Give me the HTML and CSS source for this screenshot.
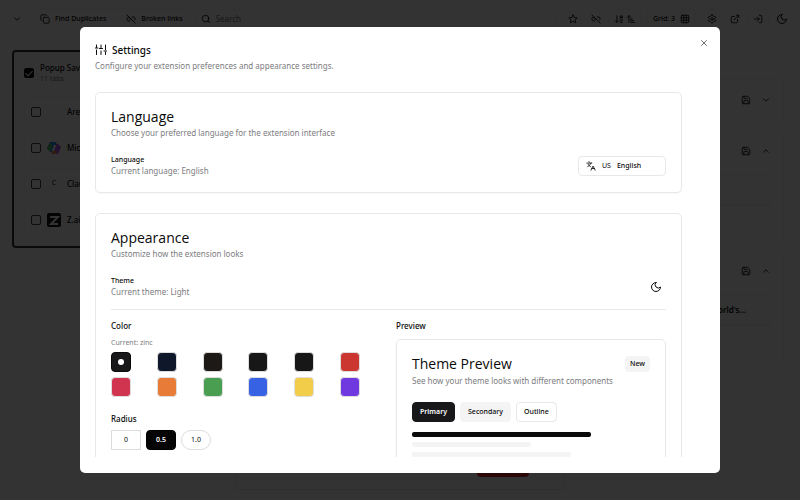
FILE: index.html
```html
<!DOCTYPE html>
<html lang="en">
<head>
  <meta charset="UTF-8">
  <meta name="viewport" content="width=device-width, initial-scale=1.0">
  <title>Settings</title>
  <link rel="stylesheet" href="styles.css">
</head>
<body>
<svg class="sprite" aria-hidden="true">
  <symbol id="chevron-down" viewBox="0 0 24 24"><path d="m6 9 6 6 6-6"/></symbol>
  <symbol id="chevron-up" viewBox="0 0 24 24"><path d="m18 15-6-6-6 6"/></symbol>
  <symbol id="copy" viewBox="0 0 24 24"><rect width="14" height="14" x="8" y="8" rx="2"/><path d="M4 16c-1.1 0-2-.9-2-2V4c0-1.1.9-2 2-2h10c1.1 0 2 .9 2 2"/></symbol>
  <symbol id="unlink" viewBox="0 0 24 24"><path d="M9 17H7A5 5 0 0 1 7 7"/><path d="M15 7h2a5 5 0 0 1 4 8"/><path d="M8 12h4"/><path d="m2 2 20 20"/></symbol>
  <symbol id="search" viewBox="0 0 24 24"><circle cx="11" cy="11" r="8"/><path d="m21 21-4.3-4.3"/></symbol>
  <symbol id="star" viewBox="0 0 24 24"><path d="m12 2 3.1 6.3 6.9 1-5 4.9 1.2 6.8-6.2-3.2L5.800 21 7 14.200 2 9.300l6.900-1z"/></symbol>
  <symbol id="sort-az" viewBox="0 0 24 24"><path d="m3 16 4 4 4-4"/><path d="M7 20V4"/><path d="M20 8h-5"/><path d="M15 10V6.500a2.500 2.500 0 0 1 5 0V10"/><path d="M15 14h5l-5 6h5"/></symbol>
  <symbol id="sort-up" viewBox="0 0 24 24"><path d="m3 8 4-4 4 4"/><path d="M7 4v16"/><path d="M11 12h4"/><path d="M11 16h7"/><path d="M11 20h10"/></symbol>
  <symbol id="grid" viewBox="0 0 24 24"><rect width="18" height="18" x="3" y="3" rx="2"/><path d="M3 9h18M3 15h18M9 3v18M15 3v18"/></symbol>
  <symbol id="gear" viewBox="0 0 24 24"><path d="M12.220 2h-.44a2 2 0 0 0-2 2v.18a2 2 0 0 1-1 1.730l-.43.25a2 2 0 0 1-2 0l-.15-.08a2 2 0 0 0-2.730.73l-.22.38a2 2 0 0 0 .73 2.730l.15.1a2 2 0 0 1 1 1.720v.51a2 2 0 0 1-1 1.740l-.15.09a2 2 0 0 0-.73 2.730l.22.38a2 2 0 0 0 2.730.73l.15-.08a2 2 0 0 1 2 0l.43.25a2 2 0 0 1 1 1.730V20a2 2 0 0 0 2 2h.44a2 2 0 0 0 2-2v-.18a2 2 0 0 1 1-1.730l.43-.25a2 2 0 0 1 2 0l.15.08a2 2 0 0 0 2.730-.73l.22-.39a2 2 0 0 0-.73-2.730l-.15-.08a2 2 0 0 1-1-1.740v-.5a2 2 0 0 1 1-1.740l.15-.09a2 2 0 0 0 .73-2.730l-.22-.38a2 2 0 0 0-2.730-.73l-.15.08a2 2 0 0 1-2 0l-.43-.25a2 2 0 0 1-1-1.730V4a2 2 0 0 0-2-2z"/><circle cx="12" cy="12" r="3"/></symbol>
  <symbol id="external" viewBox="0 0 24 24"><path d="M15 3h6v6"/><path d="M10 14 21 3"/><path d="M18 13v6a2 2 0 0 1-2 2H5a2 2 0 0 1-2-2V8a2 2 0 0 1 2-2h6"/></symbol>
  <symbol id="login" viewBox="0 0 24 24"><path d="M15 3h4a2 2 0 0 1 2 2v14a2 2 0 0 1-2 2h-4"/><path d="m10 17 5-5-5-5"/><path d="M15 12H3"/></symbol>
  <symbol id="moon" viewBox="0 0 24 24"><path d="M12 3a6 6 0 0 0 9 9 9 9 0 1 1-9-9Z"/></symbol>
  <symbol id="save" viewBox="0 0 24 24"><path d="M15.200 3a2 2 0 0 1 1.400.6l3.800 3.800a2 2 0 0 1 .6 1.400V19a2 2 0 0 1-2 2H5a2 2 0 0 1-2-2V5a2 2 0 0 1 2-2z"/><path d="M17 21v-7a1 1 0 0 0-1-1H8a1 1 0 0 0-1 1v7"/><path d="M7 3v4a1 1 0 0 0 1 1h7"/></symbol>
  <symbol id="sliders" viewBox="0 0 24 24"><path d="M3 21v-9M3 7V2M12 21v-7M12 9V2M21 21v-5M21 11V2M0 8h6M9 9h6M18 14h6"/></symbol>
  <symbol id="languages" viewBox="0 0 24 24"><path d="m5 8 6 6"/><path d="m4 14 6-6 2-3"/><path d="M2 5h12"/><path d="M7 2h1"/><path d="m22 22-5-10-5 10"/><path d="M14 18h6"/></symbol>
  <symbol id="close" viewBox="0 0 24 24"><path d="M18 6 6 18M6 6l12 12"/></symbol>
</svg>

<header class="toolbar">
  <button class="tool-button" aria-label="Collapse"><svg class="icon"><use href="#chevron-down"/></svg></button>
  <div class="tool-group">
    <button class="tool-button"><svg class="icon"><use href="#copy"/></svg>Find Duplicates</button>
    <button class="tool-button"><svg class="icon"><use href="#unlink"/></svg>Broken links</button>
  </div>
  <div class="search">
    <svg class="icon"><use href="#search"/></svg>
    <input type="text" placeholder="Search" aria-label="Search">
  </div>
  <div class="tool-icons">
    <button class="tool-button" aria-label="Favorites"><svg class="icon"><use href="#star"/></svg></button>
    <button class="tool-button" aria-label="Unlink"><svg class="icon"><use href="#unlink"/></svg></button>
    <button class="tool-button sort-button outlined" aria-label="Sort"><svg class="icon"><use href="#sort-az"/></svg><svg class="icon"><use href="#sort-up"/></svg></button>
    <button class="tool-button outlined grid-button">Grid: 3 <svg class="icon"><use href="#grid"/></svg></button>
    <button class="tool-button outlined" aria-label="Settings"><svg class="icon"><use href="#gear"/></svg></button>
    <button class="tool-button" aria-label="Open"><svg class="icon"><use href="#external"/></svg></button>
    <button class="tool-button outlined" aria-label="Log in"><svg class="icon"><use href="#login"/></svg></button>
    <button class="tool-button" aria-label="Theme"><svg class="icon icon-lg"><use href="#moon"/></svg></button>
  </div>
</header>

<main class="board">
  <section class="group">
    <div class="group-header">
      <input type="checkbox" id="popup" checked>
      <label for="popup">Popup Saved<small>11 tabs</small></label>
    </div>
    <ul class="tabs">
      <li><input type="checkbox" id="tab-1"><span class="favicon"></span><label for="tab-1">Arena</label></li>
      <li><input type="checkbox" id="tab-2">
        <svg class="favicon" viewBox="0 0 14 14">
          <path d="M3 1h6l1 3H7L5 11H3L0 7z" fill="#2496e8"/>
          <path d="M0 6l3-3h2L4 10H2z" fill="#4fc36a"/>
          <path d="M11 3l3 3-3 7H5l-1-3h3l2-7z" fill="#b158e8"/>
          <path d="M5 10h5l-1 3H5z" fill="#f18a4b"/>
          <path d="M7 4h2l-2 6H5z" fill="#fff"/>
        </svg>
        <label for="tab-2">Microsoft</label></li>
      <li><input type="checkbox" id="tab-3"><span class="favicon letter">C</span><label for="tab-3">Claude</label></li>
      <li><input type="checkbox" id="tab-4">
        <svg class="favicon" viewBox="0 0 14 14">
          <rect width="14" height="14" rx="2" fill="#111"/>
          <path d="M3 4h8l-7 7h7" fill="none" stroke="#fff" stroke-width="2"/>
        </svg>
        <label for="tab-4">Z.ai</label></li>
    </ul>
  </section>

  <section class="column">
    <article class="card-row">
      <div class="card-actions"><svg class="icon"><use href="#save"/></svg><svg class="icon"><use href="#chevron-down"/></svg></div>
    </article>
    <article class="card-row">
      <div class="card-actions"><svg class="icon"><use href="#save"/></svg><svg class="icon"><use href="#chevron-up"/></svg></div>
      <div class="entry"></div>
      <div class="entry"></div>
    </article>
    <article class="card-row">
      <div class="card-actions"><svg class="icon"><use href="#save"/></svg><svg class="icon"><use href="#chevron-up"/></svg></div>
      <div class="entry">The World's...</div>
      <div class="entry"></div>
    </article>
  </section>
</main>

<div class="selection-bar">
  <button class="delete-button">Delete</button>
</div>

<div class="overlay">
  <div class="dialog" role="dialog" aria-labelledby="dialog-title">
    <button class="close-button" aria-label="Close"><svg class="icon"><use href="#close"/></svg></button>
    <div class="dialog-header">
      <h1 id="dialog-title"><svg class="icon icon-lg"><use href="#sliders"/></svg>Settings</h1>
      <p class="muted">Configure your extension preferences and appearance settings.</p>
    </div>

    <div class="dialog-body">
      <section class="card">
        <h2>Language</h2>
        <p class="muted">Choose your preferred language for the extension interface</p>
        <div class="setting">
          <div>
            <h3>Language</h3>
            <p class="muted">Current language: English</p>
          </div>
          <button class="language-button"><svg class="icon"><use href="#languages"/></svg><span class="flag">US</span><span>English</span></button>
        </div>
      </section>

      <section class="card">
        <h2>Appearance</h2>
        <p class="muted">Customize how the extension looks</p>
        <div class="setting">
          <div>
            <h3>Theme</h3>
            <p class="muted">Current theme: Light</p>
          </div>
          <button class="theme-button" aria-label="Toggle theme"><svg class="icon icon-lg"><use href="#moon"/></svg></button>
        </div>

        <div class="appearance">
          <div>
            <h4>Color</h4>
            <p class="current">Current: zinc</p>
            <div class="swatches">
              <button class="swatch zinc active" aria-label="Zinc"></button>
              <button class="swatch slate" aria-label="Slate"></button>
              <button class="swatch stone" aria-label="Stone"></button>
              <button class="swatch gray" aria-label="Gray"></button>
              <button class="swatch neutral" aria-label="Neutral"></button>
              <button class="swatch red" aria-label="Red"></button>
              <button class="swatch rose" aria-label="Rose"></button>
              <button class="swatch orange" aria-label="Orange"></button>
              <button class="swatch green" aria-label="Green"></button>
              <button class="swatch blue" aria-label="Blue"></button>
              <button class="swatch yellow" aria-label="Yellow"></button>
              <button class="swatch violet" aria-label="Violet"></button>
            </div>
            <h4>Radius</h4>
            <div class="radius-options">
              <button class="radius square">0</button>
              <button class="radius active">0.5</button>
              <button class="radius round">1.0</button>
            </div>
          </div>
          <div>
            <h4>Preview</h4>
            <div class="card preview">
              <div class="preview-header">
                <h2>Theme Preview</h2>
                <span class="badge">New</span>
              </div>
              <p class="muted">See how your theme looks with different components</p>
              <div class="preview-buttons">
                <button class="button primary">Primary</button>
                <button class="button secondary">Secondary</button>
                <button class="button">Outline</button>
              </div>
              <div class="bar bar-primary"></div>
              <div class="bar bar-half"></div>
              <div class="bar bar-two-thirds"></div>
            </div>
          </div>
        </div>
      </section>
    </div>
  </div>
</div>
</body>
</html>
```
FILE: styles.css
```css
:root {
  --foreground: #0a0a0a;
  --primary: #18181b;
  --muted: #7c7c80;
  --border: #e8e8ea;
  --border-light: #f2f2f3;
  --secondary: #f4f4f5;
}

* {
  box-sizing: border-box;
}

body {
  margin: 0;
  height: 100vh;
  overflow: hidden;
  font-family: "Noto Sans", sans-serif;
  font-size: 8px;
  line-height: 12px;
  color: var(--foreground);
  background: #fff;
}

h1, h2, h3, h4, p, ul {
  margin: 0;
  padding: 0;
}

button, input {
  font: inherit;
  color: inherit;
}

button {
  display: flex;
  align-items: center;
  justify-content: center;
  padding: 0;
  border: 1px solid transparent;
  border-radius: 4px;
  background: none;
  cursor: pointer;
}

.sprite {
  display: none;
}

.icon {
  width: 10px;
  height: 10px;
  flex: none;
  fill: none;
  stroke: currentColor;
  stroke-width: 2;
  stroke-linecap: round;
  stroke-linejoin: round;
}

.icon-lg {
  width: 12px;
  height: 12px;
}

/* page behind the dialog */
.toolbar {
  display: flex;
  align-items: center;
  height: 38px;
  padding: 0 6px;
  gap: 5px;
  border-bottom: 1px solid var(--border-light);
  font-size: 7px;
  font-weight: 500;
}

.tool-button {
  height: 20px;
  min-width: 22px;
  gap: 5px;
  padding: 0 5px;
}

.tool-group {
  display: flex;
  gap: 8px;
  border: 1px solid var(--border-light);
  border-radius: 4px;
}

.search {
  display: flex;
  flex: 1;
  align-items: center;
  gap: 5px;
  height: 20px;
  padding: 0 5px;
  border: 1px solid var(--border-light);
  border-radius: 4px;
}

.search input {
  width: 100%;
  padding: 0;
  border: 0;
  outline: none;
  background: none;
  font-size: 8px;
  font-weight: 400;
}

.tool-icons {
  display: flex;
  align-items: center;
  gap: 1px;
}

.outlined {
  border-color: var(--border-light);
}

.sort-button {
  gap: 2px;
}

.grid-button {
  margin: 0 4px;
}

.board {
  display: flex;
  justify-content: space-between;
  padding: 12px 16px 0 12px;
}

.group {
  width: 200px;
  height: 198px;
  padding: 10px 8px 0 10px;
  border: 2px solid #333;
  border-radius: 4px;
}

.group-header {
  display: flex;
  align-items: center;
  gap: 6px;
  font-weight: 500;
}

.group-header small {
  display: block;
  font-size: 7px;
  line-height: 10px;
  font-weight: 400;
  color: var(--muted);
}

input[type="checkbox"] {
  appearance: none;
  width: 10px;
  height: 10px;
  margin: 0;
  border: 1px solid #444;
  border-radius: 2px;
}

input[type="checkbox"]:checked {
  border-color: var(--foreground);
  background: var(--foreground);
}

input[type="checkbox"]:checked::after {
  content: "";
  display: block;
  width: 3px;
  height: 6px;
  margin: 0 auto;
  border: solid #fff;
  border-width: 0 1px 1px 0;
  transform: rotate(45deg);
}

.tabs {
  display: grid;
  gap: 5px;
  margin-top: 12px;
  list-style: none;
}

.tabs li {
  display: flex;
  align-items: center;
  gap: 6px;
  height: 31px;
  padding: 0 6px;
  border: 1px solid var(--border-light);
  border-radius: 4px;
  font-weight: 500;
}

.favicon {
  width: 14px;
  height: 14px;
}

.letter {
  font-size: 7px;
  font-weight: 400;
  text-align: center;
}

.column {
  display: grid;
  align-content: start;
  gap: 8px;
  width: 184px;
  padding-top: 29px;
}

.card-row {
  padding: 10px 12px 6px;
  border: 1px solid var(--border-light);
  border-radius: 4px;
}

.card-actions {
  display: flex;
  align-items: center;
  justify-content: flex-end;
  gap: 10px;
  height: 30px;
  margin: -5px 0 0;
}

.entry {
  height: 30px;
  padding: 8px 24px;
  border: 1px solid var(--border-light);
  text-align: right;
  font-weight: 600;
}

.card-actions + .entry {
  margin-top: 9px;
}

.selection-bar {
  position: absolute;
  bottom: 10px;
  left: 50%;
  display: flex;
  justify-content: flex-end;
  width: 330px;
  padding: 12px 35px;
  transform: translateX(-50%);
  border: 1px solid var(--border);
  border-radius: 4px;
  background: #fff;
}

.delete-button {
  width: 52px;
  height: 20px;
  color: #fff;
  background: #dc2626;
}

/* settings dialog */
.overlay {
  position: fixed;
  inset: 0;
  display: flex;
  align-items: center;
  justify-content: center;
  background: rgba(0, 0, 0, 0.8);
}

.dialog {
  position: relative;
  display: flex;
  flex-direction: column;
  gap: 20px;
  width: 80%;
  max-height: calc(100% - 54px);
  padding: 16px 15px;
  border-radius: 5px;
  background: #fff;
}

.close-button {
  position: absolute;
  top: 10px;
  right: 10px;
  color: #555;
}

.dialog-header h1 {
  display: flex;
  align-items: center;
  gap: 5px;
  font-size: 10px;
  line-height: 14px;
  font-weight: 500;
}

.dialog-header .muted {
  margin-top: 3px;
}

.muted {
  color: var(--muted);
}

.dialog-body {
  display: grid;
  gap: 20px;
  padding-right: 23px;
  overflow: hidden;
}

.card {
  padding: 15px;
  border: 1px solid var(--border);
  border-radius: 5px;
  box-shadow: 0 1px 2px rgba(0, 0, 0, 0.04);
}

h2 {
  font-family: "Open Sans", sans-serif;
  font-size: 14px;
  line-height: 17px;
  font-weight: 500;
}

h2 + .muted,
.preview-header + .muted {
  margin-top: 2px;
}

h3 {
  font-size: 7px;
  line-height: 10px;
  font-weight: 500;
}

h4 {
  font-size: 8px;
  line-height: 12px;
  font-weight: 500;
}

.setting {
  display: flex;
  align-items: center;
  justify-content: space-between;
  margin-top: 16px;
}

.language-button {
  justify-content: flex-start;
  width: 88px;
  height: 20px;
  gap: 6px;
  padding: 0 7px;
  border-color: var(--border);
  font-size: 7px;
  font-weight: 500;
}

.flag {
  font-weight: 400;
}

.theme-button {
  width: 20px;
  height: 20px;
}

.appearance {
  display: grid;
  grid-template-columns: 1fr 1fr;
  gap: 15px;
  margin-top: 11px;
  padding-top: 10px;
  border-top: 1px solid var(--border);
}

.current {
  margin-top: 6px;
  font-size: 7px;
  line-height: 10px;
  color: var(--muted);
}

.swatches {
  display: grid;
  grid-template-columns: repeat(6, 1fr);
  gap: 5px;
  margin: 4px 0 16px;
}

.swatch {
  width: 20px;
  height: 20px;
  border: 1px solid #ddd;
}

.swatch.active {
  border-color: var(--foreground);
}

.swatch.active::after {
  content: "";
  width: 6px;
  height: 6px;
  border-radius: 50%;
  background: #fff;
}

.zinc { background: #18181b; }
.slate { background: #0f172a; }
.stone { background: #1c1917; }
.gray { background: #171717; }
.neutral { background: #171717; }
.red { background: #cc3631; }
.rose { background: #d1344f; }
.orange { background: #e87b38; }
.green { background: #4a9e52; }
.blue { background: #3662e3; }
.yellow { background: #f2cd4a; }
.violet { background: #7039e0; }

.radius-options {
  display: flex;
  gap: 5px;
  margin-top: 5px;
}

.radius {
  width: 30px;
  height: 20px;
  border-color: #dcdcde;
  font-size: 7px;
}

.radius.square {
  border-radius: 0;
}

.radius.round {
  border-radius: 10px;
}

.radius.active {
  border-color: #000;
  color: #fff;
  background: #050505;
  font-weight: 600;
}

.preview {
  margin-top: 7px;
}

.preview-header {
  display: flex;
  align-items: center;
  justify-content: space-between;
}

.preview-header h2 {
  line-height: 18px;
}

.badge {
  padding: 2px 5px;
  border-radius: 4px;
  background: var(--secondary);
  font-size: 7px;
  font-weight: 500;
}

.preview-buttons {
  display: flex;
  gap: 5px;
  margin: 15px 0 10px;
}

.button {
  height: 20px;
  padding: 0 7px;
  border-color: var(--border);
  font-size: 7px;
  font-weight: 500;
}

.primary {
  border-color: var(--primary);
  color: #fff;
  background: var(--primary);
  font-weight: 600;
}

.secondary {
  border-color: var(--secondary);
  background: var(--secondary);
}

.bar {
  height: 5px;
  margin-bottom: 5px;
  border-radius: 2px;
  background: var(--secondary);
}

.bar-primary {
  width: 75%;
  background: var(--foreground);
}

.bar-half {
  width: 50%;
}

.bar-two-thirds {
  width: 67%;
}
```
